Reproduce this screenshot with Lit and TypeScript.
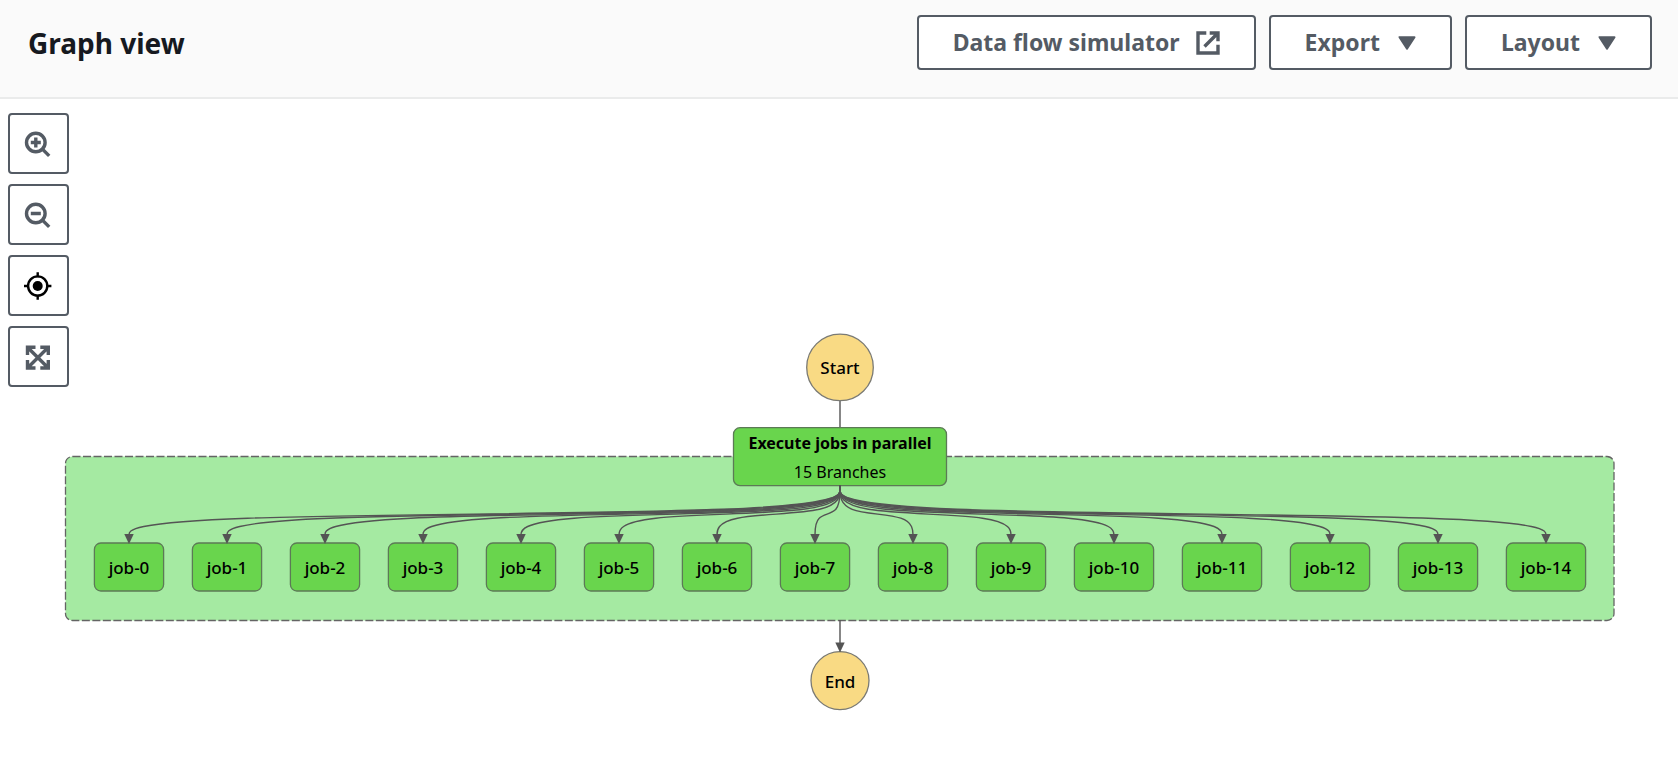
import { LitElement, html, svg, css } from "lit";
import { customElement, property } from "lit/decorators.js";

interface Point {
  x: number;
  y: number;
}

interface Job {
  label: string;
  x: number;
  width: number;
}

const CENTER = 840;
const JOB_TOP = 444;
const JOB_HEIGHT = 48;
const JOB_GAP = 28;

function layoutJobs(count: number): Job[] {
  const jobs: Job[] = [];
  let x = 94;
  for (let i = 0; i < count; i++) {
    const width = i < 10 ? 70 : 80;
    jobs.push({ label: `job-${i}`, x, width });
    x += width + JOB_GAP;
  }
  return jobs;
}

/* Uniform B-spline through the four routing points of an edge. */
function basisPath(points: Point[]): string {
  const first = points[0];
  const last = points[points.length - 1];
  const padded = [first, ...points, last];
  const mix = (a: Point, b: Point, wa: number, wb: number) =>
    `${((a.x * wa + b.x * wb) / (wa + wb)).toFixed(1)},${((a.y * wa + b.y * wb) / (wa + wb)).toFixed(1)}`;
  let d = `M${first.x},${first.y}L${mix(first, points[1], 5, 1)}`;
  for (let i = 1; i < padded.length - 2; i++) {
    const a = padded[i];
    const b = padded[i + 1];
    const c = padded[i + 2];
    const end = `${((a.x + 4 * b.x + c.x) / 6).toFixed(1)},${((a.y + 4 * b.y + c.y) / 6).toFixed(1)}`;
    d += `C${mix(a, b, 2, 1)} ${mix(a, b, 1, 2)} ${end}`;
  }
  return d + `L${last.x},${last.y}`;
}

@customElement("workflow-graph")
export class WorkflowGraph extends LitElement {
  @property({ type: Number }) branches = 15;

  static styles = css`
    :host {
      display: block;
      height: 100%;
    }
    .graph {
      display: block;
      width: 100%;
      height: 100%;
    }
    .label {
      font-family: "Noto Sans", "Open Sans", sans-serif;
      font-size: 17px;
      font-weight: 500;
      text-anchor: middle;
      fill: #000;
    }
    .strong {
      font-weight: 700;
      font-size: 16px;
    }
    .detail {
      font-weight: 400;
      font-size: 16px;
    }
    .terminal {
      fill: #f9da84;
      stroke: #7a7a74;
      stroke-width: 1.3;
    }
    .state {
      fill: #69d54d;
      stroke: #5c7a56;
      stroke-width: 1.3;
    }
    .group {
      fill: #a5eaa2;
      stroke: #646464;
      stroke-width: 1.3;
      stroke-dasharray: 8 2.5;
    }
    .edge {
      fill: none;
      stroke: #545454;
      stroke-width: 1.4;
    }
    .arrow {
      fill: #545454;
    }
  `;

  private renderArrow(x: number, tip: number) {
    return svg`<path class="arrow" d="M${x - 4.7} ${tip - 10}h9.4L${x} ${tip}z"></path>`;
  }

  private renderJob(job: Job) {
    const mid = job.x + job.width / 2;
    return svg`
      <rect class="state" x=${job.x + 0.4} y=${JOB_TOP} width=${job.width - 0.8} height=${JOB_HEIGHT} rx="6.5"></rect>
      <text class="label" x=${mid} y="475">${job.label}</text>
    `;
  }

  private renderEdge(job: Job) {
    const x = job.x + job.width / 2;
    return svg`
      <path class="edge" d=${basisPath([
        { x: CENTER, y: 386.5 },
        { x: CENTER, y: 415 },
        { x, y: 415 },
        { x, y: 440 },
      ])}></path>
      ${this.renderArrow(x, 445)}
    `;
  }

  render() {
    const jobs = layoutJobs(this.branches);
    return html`
      <svg class="graph" viewBox="0 0 1678 667" role="img" aria-label="Workflow graph">
        <rect class="group" x="65.5" y="357.5" width="1548.5" height="164" rx="7"></rect>
        <path class="edge" d="M${CENTER} 302V329M${CENTER} 521V545"></path>
        <circle class="terminal" cx=${CENTER} cy="268.4" r="33.3"></circle>
        <text class="label" x=${CENTER} y="275">Start</text>
        <rect class="state" x="733.5" y="328.7" width="213" height="58" rx="6.5"></rect>
        <text class="label strong" x=${CENTER} y="350">Execute jobs in parallel</text>
        <text class="label detail" x=${CENTER} y="379">${this.branches} Branches</text>
        ${jobs.map((job) => this.renderJob(job))}
        ${jobs.map((job) => this.renderEdge(job))}
        <circle class="terminal" cx=${CENTER} cy="581.6" r="29"></circle>
        <text class="label" x=${CENTER} y="589">End</text>
        ${this.renderArrow(CENTER, 553.5)}
      </svg>
    `;
  }
}

@customElement("app-root")
export class AppRoot extends LitElement {
  static styles = css`
    :host {
      display: flex;
      flex-direction: column;
      min-height: 100vh;
      background: #fff;
      font-family: "Noto Sans", "Open Sans", sans-serif;
      color: #16191f;
    }
    .header {
      display: flex;
      align-items: center;
      justify-content: space-between;
      box-sizing: border-box;
      padding: 15px 26px 27px 28px;
      background: #fafafa;
      border-bottom: 2px solid #eaebeb;
    }
    .title {
      margin: 0;
      font-size: 28px;
      line-height: 36px;
      font-weight: 700;
    }
    .actions {
      display: flex;
      gap: 13px;
    }
    .button {
      display: flex;
      align-items: center;
      justify-content: center;
      box-sizing: border-box;
      margin: 0;
      padding: 8px 34px;
      gap: 16px;
      border: 2px solid #545b64;
      border-radius: 4px;
      background: #fff;
      color: #545b64;
      font-family: inherit;
      font-size: 23px;
      line-height: 35px;
      font-weight: 700;
      cursor: pointer;
    }
    .menu {
      gap: 18px;
    }
    .button:hover,
    .tool:hover {
      background: #fafafa;
    }
    .external {
      width: 24px;
      height: 24px;
    }
    .caret {
      width: 18px;
      height: 16px;
    }
    .canvas {
      position: relative;
      flex: 1;
      display: grid;
      grid-template-rows: minmax(0, 1fr);
      min-height: 0;
    }
    .tools {
      position: absolute;
      top: 14px;
      left: 8px;
      display: flex;
      flex-direction: column;
      gap: 10px;
    }
    .tool {
      display: grid;
      place-items: center;
      box-sizing: border-box;
      width: 61px;
      height: 61px;
      margin: 0;
      padding: 0;
      border: 2px solid #545b64;
      border-radius: 4px;
      background: #fff;
      color: #545b64;
      cursor: pointer;
    }
    .glyph {
      width: 29px;
      height: 29px;
    }
    .line {
      fill: none;
      stroke: currentColor;
      stroke-width: 3.4;
    }
    .solid {
      fill: currentColor;
      stroke: currentColor;
      stroke-width: 2;
      stroke-linejoin: round;
    }
    .ink {
      fill: none;
      stroke: #000;
      stroke-width: 2.4;
    }
    .dot {
      fill: #000;
    }
  `;

  private caret() {
    return html`<svg class="caret" viewBox="0 0 18 16" aria-hidden="true">
      <path class="solid" d="M1.5 2.2h15L9 13.6z"></path>
    </svg>`;
  }

  private magnifier(plus: boolean) {
    return html`<svg class="glyph" viewBox="0 0 29 29" aria-hidden="true">
      <circle class="line" cx="11.8" cy="13.5" r="9.3"></circle>
      <path class="line" d="M18.2 19.9l7 7M6.8 13.5h10"></path>
      ${plus ? svg`<path class="line" d="M11.8 8.5v10"></path>` : null}
    </svg>`;
  }

  render() {
    return html`
      <header class="header">
        <h2 class="title">Graph view</h2>
        <div class="actions">
          <button class="button" type="button">
            Data flow simulator
            <svg class="external" viewBox="0 0 24 24" aria-hidden="true">
              <path class="line" d="M10.3 2H2v20h20v-8.3M13.7 2H22v8.3M21.5 2.5L8.5 15.5"></path>
            </svg>
          </button>
          <button class="button menu" type="button" aria-haspopup="menu">Export ${this.caret()}</button>
          <button class="button menu" type="button" aria-haspopup="menu">Layout ${this.caret()}</button>
        </div>
      </header>
      <main class="canvas">
        <workflow-graph .branches=${15}></workflow-graph>
        <div class="tools" role="toolbar" aria-label="Graph controls">
          <button class="tool" type="button" aria-label="Zoom in">${this.magnifier(true)}</button>
          <button class="tool" type="button" aria-label="Zoom out">${this.magnifier(false)}</button>
          <button class="tool" type="button" aria-label="Center graph">
            <svg class="glyph" viewBox="0 0 29 29" aria-hidden="true">
              <circle class="ink" cx="13.7" cy="15" r="9.6"></circle>
              <circle class="dot" cx="13.7" cy="15" r="5"></circle>
              <path class="ink" d="M13.7 1.2v5M13.7 23.8v5M0 15h5M22.4 15h5"></path>
            </svg>
          </button>
          <button class="tool" type="button" aria-label="Fit to screen">
            <svg class="glyph" viewBox="0 0 29 29" aria-hidden="true">
              <path class="line" d="M3.5 13V5.2H11.5M16.3 5.2H24.3V13M24.3 18V26H16.3M11.5 26H3.5V18M4 5.7L23.8 25.5M23.8 5.7L4 25.5"></path>
            </svg>
          </button>
        </div>
      </main>
    `;
  }
}
